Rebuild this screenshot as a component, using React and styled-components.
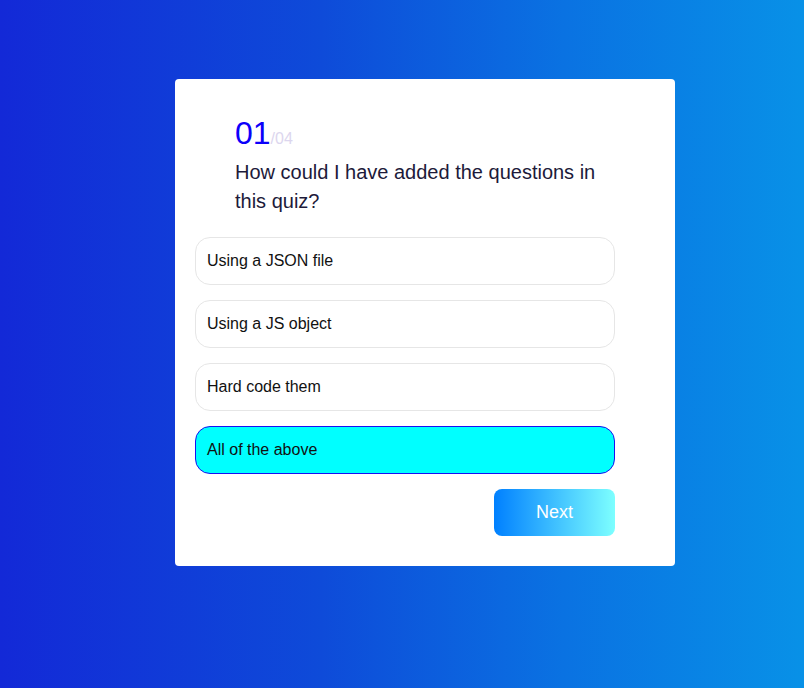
import React, { useState } from "react";
import styled, { createGlobalStyle } from "styled-components";

const GlobalStyle = createGlobalStyle`
  html, body {
    margin: 0;
    padding: 0;
  }
  body {
    font-family: "Liberation Sans", Arial, sans-serif;
  }
`;

const Page = styled.main`
  min-height: 688px;
  box-sizing: border-box;
  padding: 79px 0 0 175px;
  background: linear-gradient(to right, #1329d7 0%, #0e4bd9 40%, #0a72e2 70%, #0891e7 100%);
`;

const Card = styled.section`
  width: 500px;
  box-sizing: border-box;
  background: #fff;
  border-radius: 4px;
  padding: 36px 20px 30px;
`;

const QuestionBox = styled.div`
  padding: 0 40px;
  max-width: 372px;
`;

const Count = styled.div`
  font-size: 32px;
  line-height: 37px;
  color: #0c00fa;
  span {
    font-size: 16px;
    color: #dcd6ee;
  }
`;

const QuestionText = styled.h2`
  margin: 1px 0 0;
  font-size: 20px;
  font-weight: 400;
  line-height: 29px;
  color: #1d1a3a;
`;

const Options = styled.div`
  margin-top: 21px;
  width: 420px;
  display: flex;
  flex-direction: column;
  gap: 15px;
`;

const Option = styled.button`
  height: 48px;
  box-sizing: border-box;
  padding: 0 11px;
  text-align: left;
  font-family: inherit;
  font-size: 16px;
  color: #111;
  border-radius: 15px;
  border: 1px solid ${(p) => (p.$selected ? "#1a0ff0" : "#e6e6e6")};
  background: ${(p) => (p.$selected ? "#00ffff" : "#fff")};
  cursor: pointer;
`;

const Footer = styled.div`
  width: 420px;
  display: flex;
  justify-content: flex-end;
  margin-top: 15px;
`;

const NextButton = styled.button`
  width: 121px;
  height: 47px;
  border: none;
  border-radius: 8px;
  background: linear-gradient(to right, #0080ff, #7dffff);
  color: #fff;
  font-family: inherit;
  font-size: 18px;
  cursor: pointer;
`;

const App = () => {
  const answers = ["Using a JSON file", "Using a JS object", "Hard code them", "All of the above"];
  const [selected, setSelected] = useState(3);
  return (
    <>
      <GlobalStyle />
      <Page>
        <Card>
          <QuestionBox>
            <Count>
              01<span>/04</span>
            </Count>
            <QuestionText>How could I have added the questions in this quiz?</QuestionText>
          </QuestionBox>
          <Options>
            {answers.map((answer, index) => (
              <Option key={index} $selected={selected === index} onClick={() => setSelected(index)}>
                {answer}
              </Option>
            ))}
          </Options>
          <Footer>
            <NextButton>Next</NextButton>
          </Footer>
        </Card>
      </Page>
    </>
  );
};

export default App;
